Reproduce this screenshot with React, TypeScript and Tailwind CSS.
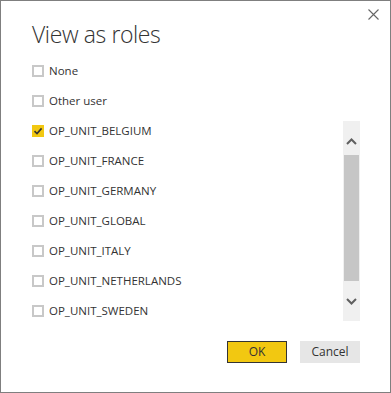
import React from "react";

const topRoles = ["None", "Other user"];
const scrollRoles = [
  "OP_UNIT_BELGIUM",
  "OP_UNIT_FRANCE",
  "OP_UNIT_GERMANY",
  "OP_UNIT_GLOBAL",
  "OP_UNIT_ITALY",
  "OP_UNIT_NETHERLANDS",
  "OP_UNIT_SWEDEN",
];

function Checkbox({ checked }: { checked?: boolean }) {
  if (checked) {
    return (
      <span className="w-[12px] h-[12px] bg-[#F2C811] flex items-center justify-center shrink-0">
        <svg width="10" height="10" viewBox="0 0 10 10">
          <path d="M1.5 5.2 L4 7.6 L8.6 2.4" fill="none" stroke="#333" strokeWidth="1.6" />
        </svg>
      </span>
    );
  }
  return <span className="w-[12px] h-[12px] border-2 border-[#c8c8c8] bg-white shrink-0" />;
}

function RoleRow({ label, checked }: { label: string; checked?: boolean }) {
  return (
    <div className="h-[30px] flex items-center gap-[5px]">
      <Checkbox checked={checked} />
      <span className="text-[11.5px] leading-[16px] text-[#333]">{label}</span>
    </div>
  );
}

export default function App() {
  return (
    <div
      className="relative w-[391px] h-[393px] bg-white border border-[#7f7f7f]"
      style={{ fontFamily: '"Open Sans", "Noto Sans", sans-serif' }}
    >
      {/* close */}
      <button className="absolute top-[8px] left-[367px] w-[11px] h-[11px]">
        <svg width="11" height="11" viewBox="0 0 11 11">
          <path d="M0.5 0.5 L10.5 10.5 M10.5 0.5 L0.5 10.5" stroke="#666" strokeWidth="1.1" />
        </svg>
      </button>

      <div className="pl-[31px] pt-[17px]">
        <h1 className="text-[23px] leading-[32px] font-light tracking-[-0.4px] text-[#333]">View as roles</h1>

        <div className="mt-[6px]">
          {topRoles.map((r) => (
            <RoleRow key={r} label={r} />
          ))}
        </div>

        <div className="flex">
          <div className="flex-1">
            {scrollRoles.map((r, i) => (
              <RoleRow key={r} label={r} checked={i === 0} />
            ))}
          </div>
          {/* scrollbar */}
          <div className="mt-[5px] mr-[30px] w-[17px] h-[200px] bg-[#f0f0f0] flex flex-col items-center">
            <div className="h-[34px] w-full flex items-center justify-center pt-[6px]">
              <svg width="11" height="7" viewBox="0 0 11 7">
                <path d="M1 6 L5.5 1.5 L10 6" fill="none" stroke="#606060" strokeWidth="2" />
              </svg>
            </div>
            <div className="w-[15px] h-[126px] bg-[#c6c6c6]" />
            <div className="flex-1 w-full flex items-center justify-center">
              <svg width="11" height="7" viewBox="0 0 11 7">
                <path d="M1 1 L5.5 5.5 L10 1" fill="none" stroke="#606060" strokeWidth="2" />
              </svg>
            </div>
          </div>
        </div>

        <div className="mt-[15px] pr-[30px] flex justify-end gap-[13px]">
          <button className="w-[60px] h-[22px] bg-[#F2C811] border border-[#333] text-[12px] text-[#333] leading-none">
            OK
          </button>
          <button className="w-[60px] h-[22px] bg-[#e6e6e6] text-[12px] text-[#333] leading-none">
            Cancel
          </button>
        </div>
      </div>
    </div>
  );
}
